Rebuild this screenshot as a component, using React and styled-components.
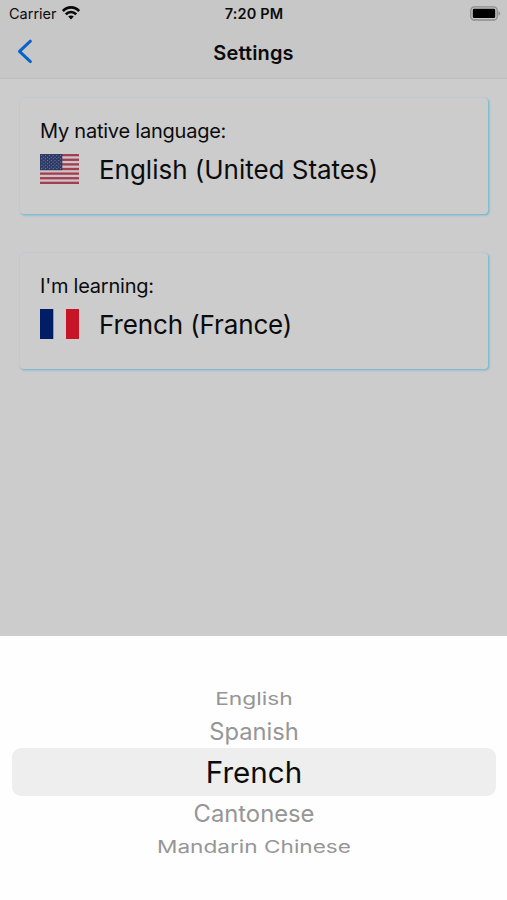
import React from 'react';
import styled, { createGlobalStyle } from 'styled-components';

const GlobalStyle = createGlobalStyle`
  * { box-sizing: border-box; }
  body { margin: 0; background: #cccccc; font-family: Inter, "Liberation Sans", sans-serif; color: #0b0b0c; }
`;

const Screen = styled.div`
  width: 507px;
  height: 900px;
  display: flex;
  flex-direction: column;
  overflow: hidden;
  background: #cccccc;
`;

const Header = styled.header`
  height: 79px;
  flex: none;
  background: #c7c7c7;
  border-bottom: 1px solid #bfbfbf;
`;

const StatusBar = styled.div`
  height: 27px;
  display: grid;
  grid-template-columns: 1fr auto 1fr;
  align-items: center;
  padding: 0 8px 0 9px;
`;

const Carrier = styled.div`
  display: flex;
  align-items: center;
  gap: 5px;
`;

const BatterySlot = styled.div`
  display: flex;
  justify-content: flex-end;
  margin-right: -2px;
`;

const NavBar = styled.div`
  height: 51px;
  display: grid;
  grid-template-columns: 1fr auto 1fr;
  align-items: center;
  padding: 0 16px;
`;

const BackButton = styled.button`
  display: flex;
  padding: 0;
  border: 0;
  margin-bottom: 2px;
  background: none;
  justify-self: start;
`;

const Label = styled.span`
  display: inline-block;
  white-space: pre;
  line-height: 1.2;
  font-size: ${(p) => p.$size}px;
  font-weight: ${(p) => p.$weight || 400};
  letter-spacing: ${(p) => p.$spacing || 0}px;
`;

const Content = styled.main`
  flex: 1;
  display: flex;
  flex-direction: column;
  gap: 39px;
  padding: 19px 19px 0 20px;
`;

const Card = styled.section`
  height: 116px;
  padding: 21px 20px 20px;
  border-radius: 4px;
  background: #cccccc;
  box-shadow: 1px 1px 1px 0 #82b8cf, 1px 1px 2px 1px #9cc4d1;
`;

const LanguageRow = styled.div`
  display: flex;
  align-items: center;
  gap: 20px;
  height: 30px;
  margin-top: 11px;
`;

const CardLabel = styled.div`
  height: 24px;
  display: flex;
  align-items: center;
`;

const LanguageName = styled(Label)`
  margin-top: 1px;
`;

const Sheet = styled.div`
  height: 264px;
  flex: none;
  background: #fefefe;
  padding: 46px 11px 0 12px;
`;

const PickerRow = styled.div`
  height: ${(p) => p.$height}px;
  display: flex;
  align-items: center;
  justify-content: center;
  color: ${(p) => (p.$selected ? '#0b0b0b' : '#969696')};
  background: ${(p) => (p.$selected ? '#eeeeee' : 'transparent')};
  border-radius: 9px;
`;

const WheelText = styled(Label)`
  transform: translateY(${(p) => p.$shift || 0}px) scaleY(${(p) => p.$squash || 1});
`;

const WifiIcon = () => (
  <svg width="18" height="14" viewBox="0 0 18 14" fill="none" stroke="#080808" strokeWidth="2.7">
    <path d="M0.9 5 C5.4 0.2 12.6 0.2 17.1 5" />
    <path d="M3.8 8.3 C6.7 5.2 11.3 5.2 14.2 8.3" />
    <path d="M9 13.4 L6.2 10.5 C7.7 9 10.3 9 11.8 10.5 Z" fill="#080808" stroke="none" />
  </svg>
);

const BatteryIcon = () => (
  <svg width="31" height="15" viewBox="0 0 31 15">
    <rect x="0.8" y="0.8" width="26.4" height="13.2" rx="3.6" fill="none" stroke="#8c8c8c" strokeWidth="1.3" />
    <rect x="2.8" y="2.8" width="22.4" height="9.2" rx="1.2" fill="#000" />
    <path d="M28.5 5 Q31.8 7.4 28.5 9.8 Z" fill="#8c8c8c" />
  </svg>
);

const BackIcon = () => (
  <svg width="17" height="25" viewBox="0 0 17 25">
    <path d="M14.4 2.2 L3.5 12.4 L14.4 22.6" fill="none" stroke="#0862cc" strokeWidth="3" strokeLinecap="round" strokeLinejoin="round" />
  </svg>
);

const stripes = Array.from({ length: 7 }, (_, i) => i);
const stars = Array.from({ length: 9 }, (_, r) =>
  Array.from({ length: r % 2 ? 5 : 6 }, (_, c) => ({ x: 1.9 + c * 3.75 + (r % 2 ? 1.87 : 0), y: 1.6 + r * 1.62 }))
).flat();

const UsFlag = () => (
  <svg width="39" height="30" viewBox="0 0 39 30">
    <rect width="39" height="30" fill="#cbc5c7" />
    {stripes.map((i) => (
      <rect key={i} y={(i * 60) / 13} width="39" height={30 / 13} fill="#a43d50" />
    ))}
    <rect width="22.3" height="16.15" fill="#2d3b66" />
    {stars.map((s) => (
      <circle key={`${s.x}-${s.y}`} cx={s.x} cy={s.y} r="0.5" fill="#8991a8" />
    ))}
  </svg>
);

const FrenchFlag = () => (
  <svg width="39" height="30" viewBox="0 0 39 30">
    <rect width="39" height="30" fill="#cfcfcf" />
    <rect width="13.3" height="30" fill="#001d66" />
    <rect x="26" width="13" height="30" fill="#c81427" />
  </svg>
);

const LanguageCard = ({ label, flag, name, nameSpacing }) => (
  <Card>
    <CardLabel><Label $size={20} $spacing={-0.23}>{label}</Label></CardLabel>
    <LanguageRow>
      {flag}
      <LanguageName $size={26} $spacing={nameSpacing}>{name}</LanguageName>
    </LanguageRow>
  </Card>
);

const languages = [
  { name: 'English', height: 32, size: 22.8, squash: 0.77, shift: 0.8 },
  { name: 'Spanish', height: 34, size: 23.7, shift: 0.5 },
  { name: 'French', height: 48, size: 29.6, shift: 1, selected: true },
  { name: 'Cantonese', height: 34, size: 23.8, shift: 0.5 },
  { name: 'Mandarin Chinese', height: 32, size: 22.6, squash: 0.77, shift: 1 },
];

export default function App() {
  return (
    <>
      <GlobalStyle />
      <Screen>
        <Header>
          <StatusBar>
            <Carrier>
              <Label $size={14.5}>Carrier</Label>
              <WifiIcon />
            </Carrier>
            <Label $size={14.5} $weight={600} $spacing={0.15}>7:20 PM</Label>
            <BatterySlot><BatteryIcon /></BatterySlot>
          </StatusBar>
          <NavBar>
            <BackButton aria-label="Back"><BackIcon /></BackButton>
            <Label $size={20} $weight={600} $spacing={0.15}>Settings</Label>
          </NavBar>
        </Header>
        <Content>
          <LanguageCard label="My native language:" flag={<UsFlag />} name="English (United States)" nameSpacing={-0.02} />
          <LanguageCard label="I'm learning:" flag={<FrenchFlag />} name="French (France)" nameSpacing={-0.12} />
        </Content>
        <Sheet>
          {languages.map((l) => (
            <PickerRow key={l.name} $height={l.height} $selected={l.selected}>
              <WheelText $size={l.size} $squash={l.squash} $shift={l.shift}>{l.name}</WheelText>
            </PickerRow>
          ))}
        </Sheet>
      </Screen>
    </>
  );
}
